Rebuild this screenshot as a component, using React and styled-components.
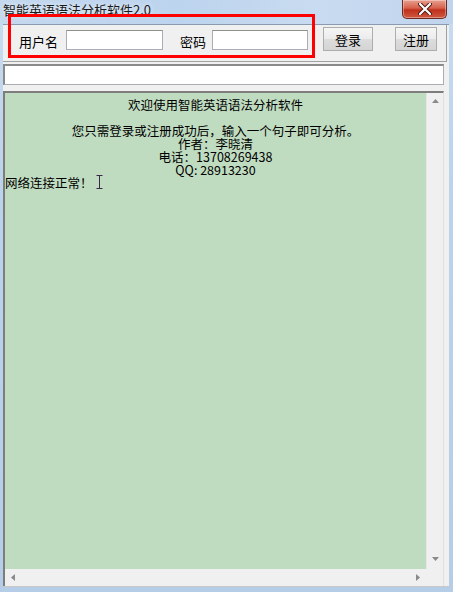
import React from "react";
import styled, { createGlobalStyle } from "styled-components";

const GlobalStyle = createGlobalStyle`
  html, body {
    margin: 0;
    padding: 0;
    background: #b9d1ea;
  }
  * { box-sizing: border-box; }
`;

const FONT = `"Noto Sans CJK SC", "Liberation Sans", sans-serif`;

const Window = styled.div`
  position: relative;
  width: 453px;
  height: 592px;
  background: linear-gradient(180deg, #c9dcf0 0%, #bcd3ec 30%, #b6cde8 100%);
  display: flex;
  flex-direction: column;
  font-family: ${FONT};
  overflow: hidden;
`;

const TitleBar = styled.div`
  height: 24px;
  display: flex;
  justify-content: space-between;
  align-items: flex-start;
  padding-left: 3px;
  padding-right: 6px;
  background: linear-gradient(90deg, #c4d8ee 0%, #bdd4ee 40%, #c8dbf0 70%, #c0d4ee 100%);
`;

const Title = styled.div`
  font-size: 13px;
  line-height: 13px;
  margin-top: 3px;
  color: #1a1a1a;
  text-shadow: 0 0 4px rgba(255, 255, 255, 0.9);
`;

const CloseButton = styled.div`
  width: 45px;
  height: 19px;
  border: 1px solid #6b2a22;
  border-top: none;
  border-radius: 0 0 5px 5px;
  background: linear-gradient(180deg, #e8a091 0%, #d6604a 45%, #c0301c 55%, #d0583f 100%);
  display: flex;
  align-items: center;
  justify-content: center;
  box-shadow: inset 0 0 0 1px rgba(255, 255, 255, 0.35);
`;

const Client = styled.div`
  flex: 1;
  margin: 0 4px 5px 3px;
  background: #f0f0f0;
  border-top: 1px solid #8a9bb0;
  border-bottom: 1px solid #c8c8c8;
  display: flex;
  flex-direction: column;
`;

const LoginPanel = styled.div`
  height: 37px;
  margin-right: 2px;
  border-right: 1px solid #a0a0a0;
  border-bottom: 1px solid #a0a0a0;
  display: flex;
  align-items: flex-start;
  padding-left: 16px;
`;

const Label = styled.span`
  font-size: 13px;
  line-height: 15px;
  color: #000;
  margin-top: 9px;
  margin-right: ${p => p.$gap}px;
`;

const TextField = styled.div`
  width: ${p => p.$w}px;
  height: 20px;
  background: #fff;
  border: 1px solid #abadb3;
  border-top-color: #8e8f8f;
  margin-right: ${p => p.$after}px;
  margin-top: 5px;
`;

const Button = styled.div`
  width: ${p => p.$w}px;
  height: 24px;
  margin-left: ${p => p.$left}px;
  margin-top: 2px;
  background: linear-gradient(180deg, #f6f6f6 0%, #ebebeb 50%, #dddddd 51%, #d4d4d4 100%);
  border: 1px solid #adadad;
  font-size: 13px;
  display: flex;
  align-items: center;
  justify-content: center;
  color: #000;
`;

const CommandLine = styled.div`
  height: 21px;
  width: 441px;
  margin-top: 2px;
  background: #fff;
  border: 1px solid #abadb3;
  border-top: 2px solid #8a8a8a;
  border-left: 2px solid #8a8a8a;
`;

const Output = styled.div`
  width: 441px;
  margin-top: 6px;
  flex: 1;
  border-top: 2px solid #7d7d7d;
  border-left: 2px solid #7d7d7d;
  border-right: 1px solid #e0e0e0;
  display: grid;
  grid-template-columns: 1fr 17px;
  grid-template-rows: 1fr 17px;
`;

const TextArea = styled.div`
  background: #c0dcc0;
  padding-top: 5px;
  font-size: 12.5px;
  line-height: 13px;
  color: #000;
`;

const Line = styled.div`
  text-align: ${p => (p.$left ? "left" : "center")};
  height: 13px;
  white-space: nowrap;
`;

const Caret = styled.span`
  display: inline-block;
  vertical-align: top;
  margin-left: 3px;
  margin-top: -1px;
`;

const ScrollV = styled.div`
  background: #f0f0f0;
  border-left: 1px solid #e6e6e6;
  display: flex;
  flex-direction: column;
  justify-content: space-between;
  align-items: center;
  padding: 6px 0 8px;
`;

const ScrollH = styled.div`
  background: #f0f0f0;
  display: flex;
  justify-content: space-between;
  align-items: center;
  padding: 0 6px 0 6px;
`;

const Corner = styled.div`
  background: #f0f0f0;
`;

const Arrow = ({ dir }) => {
  const pts = {
    up: "0,4 3.5,0 7,4",
    down: "0,0 3.5,4 7,0",
    left: "4,0 0,3.5 4,7",
    right: "0,0 4,3.5 0,7",
  }[dir];
  const vert = dir === "up" || dir === "down";
  return (
    <svg width={vert ? 7 : 4} height={vert ? 4 : 7} viewBox={vert ? "0 0 7 4" : "0 0 4 7"}>
      <polygon points={pts} fill="#8a8a8a" />
    </svg>
  );
};

const Annotation = styled.div`
  position: absolute;
  left: 8px;
  top: 14px;
  width: 307px;
  height: 44px;
  border: 3px solid #ff0000;
  pointer-events: none;
`;

export default function App() {
  return (
    <>
      <GlobalStyle />
      <Window>
        <TitleBar>
          <Title>智能英语语法分析软件2.0</Title>
          <CloseButton>
            <svg width="14" height="12" viewBox="0 0 14 12">
              <path d="M2 1 L12 11 M12 1 L2 11" stroke="#4a1a14" strokeWidth="4" strokeLinecap="round" />
              <path d="M2 1 L12 11 M12 1 L2 11" stroke="#ffffff" strokeWidth="2.2" strokeLinecap="round" />
            </svg>
          </CloseButton>
        </TitleBar>
        <Client>
          <LoginPanel>
            <Label $gap={8}>用户名</Label>
            <TextField $w={97} $after={17} />
            <Label $gap={6}>密码</Label>
            <TextField $w={96} $after={0} />
            <Button $w={50} $left={15}>登录</Button>
            <Button $w={42} $left={22}>注册</Button>
          </LoginPanel>
          <CommandLine />
          <Output>
            <TextArea>
              <Line>欢迎使用智能英语语法分析软件</Line>
              <Line />
              <Line>您只需登录或注册成功后，输入一个句子即可分析。</Line>
              <Line>作者：李晓清</Line>
              <Line>电话：13708269438</Line>
              <Line>QQ: 28913230</Line>
              <Line $left>
                网络连接正常！
                <Caret>
                  <svg width="7" height="14" viewBox="0 0 7 14">
                    <path d="M0.5 0.5 H6.5 M3.5 0.5 V13.5 M0.5 13.5 H6.5" stroke="#3a2a4a" strokeWidth="1" fill="none" />
                  </svg>
                </Caret>
              </Line>
            </TextArea>
            <ScrollV>
              <Arrow dir="up" />
              <Arrow dir="down" />
            </ScrollV>
            <ScrollH>
              <Arrow dir="left" />
              <Arrow dir="right" />
            </ScrollH>
            <Corner />
          </Output>
        </Client>
        <Annotation />
      </Window>
    </>
  );
}
